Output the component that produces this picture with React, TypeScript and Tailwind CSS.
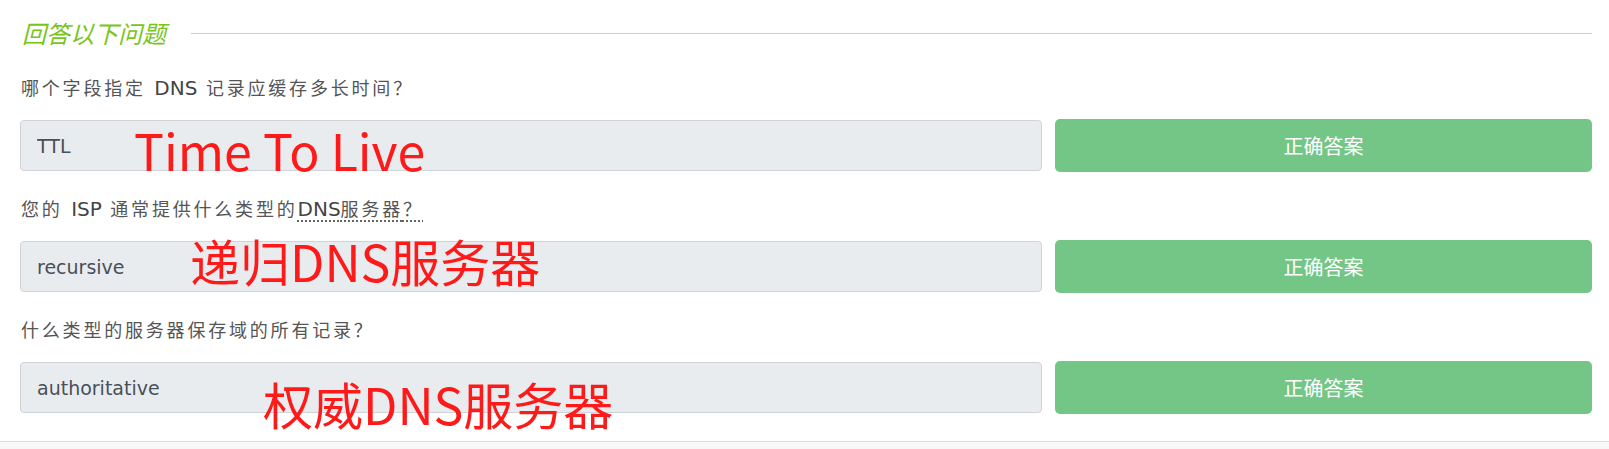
import React from "react";

type Question = {
  label: React.ReactNode;
  answer: string;
  note: string;
  noteClass: string;
};

const Q = () => <span className="font-['Noto_Sans_CJK_SC',sans-serif]">？</span>;

const L = ({ children }: { children: React.ReactNode }) => (
  <span className="text-[20px] tracking-normal text-[#444] font-['DejaVu_Sans',sans-serif]">{children}</span>
);

const questions: Question[] = [
  {
    label: (
      <>
        哪个字段指定 <L>DNS</L> 记录应缓存多长时间<Q />
      </>
    ),
    answer: "TTL",
    note: "Time To Live",
    noteClass: "left-[114px] top-[4px] text-[50px]",
  },
  {
    label: (
      <>
        您的 <L>ISP</L> 通常提供什么类型的
        <abbr title="Domain Name System" className="underline decoration-dotted underline-offset-[5px] cursor-help">
          <L>DNS</L>服务器<Q />
        </abbr>
      </>
    ),
    answer: "recursive",
    note: "递归DNS服务器",
    noteClass: "left-[170px] top-[-6px] text-[50px]",
  },
  {
    label: (
      <>
        什么类型的服务器保存域的所有记录<Q />
      </>
    ),
    answer: "authoritative",
    note: "权威DNS服务器",
    noteClass: "left-[243px] top-[16px] text-[50px]",
  },
];

const App = () => {
  return (
    <div className="min-h-screen bg-[#f7f7f7] font-['DejaVu_Sans','Noto_Sans_CJK_SC',sans-serif]">
      <section className="bg-white border-b border-[#dedede] pl-5 pr-[17px] pt-[18px] pb-[27px]">
        <div className="flex items-center h-[30px]">
          <h2 className="italic text-[24px] leading-[30px] text-[#78c51c] font-['Noto_Sans_CJK_SC',sans-serif] pl-[2px]">
            回答以下问题
          </h2>
          <div className="flex-1 h-px bg-[#cccccc] ml-[25px]"></div>
        </div>

        {questions.map((q, i) => (
          <div key={i} className={i === 0 ? "mt-[28px]" : "mt-[25px]"}>
            <p className="h-[24px] flex items-center whitespace-pre text-[18px] tracking-[2.8px] leading-[24px] text-[#555] pl-px">
              <span>{q.label}</span>
            </p>
            <div className="mt-[19px] flex items-center gap-[13px] h-[53px]">
              <div className="relative w-[1022px]">
                <input
                  readOnly
                  value={q.answer}
                  className="w-full h-[51px] rounded-[4px] border border-[#ced4da] bg-[#e9ecef] px-4 text-[19px] text-[#495057] outline-none font-['DejaVu_Sans',sans-serif]"
                />
                <span
                  className={`absolute pointer-events-none whitespace-nowrap leading-none text-[#ff1a1a] font-['Noto_Sans_CJK_SC',sans-serif] ${q.noteClass}`}
                >
                  {q.note}
                </span>
              </div>
              <button className="flex-1 h-[53px] rounded-[5px] bg-[#74c687] text-white text-[20px] font-['Noto_Sans_CJK_SC',sans-serif]">
                正确答案
              </button>
            </div>
          </div>
        ))}
      </section>
    </div>
  );
};

export default App;
